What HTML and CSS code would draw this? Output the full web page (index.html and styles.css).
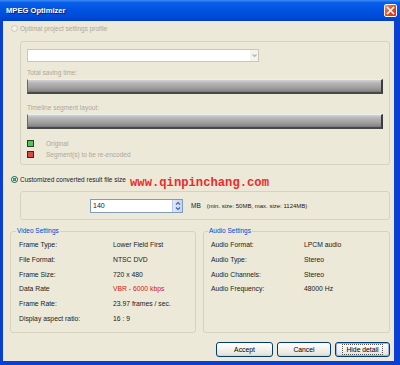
FILE: index.html
```html
<!DOCTYPE html>
<html>
<head>
<meta charset="utf-8">
<title>MPEG Optimizer</title>
<link rel="stylesheet" href="styles.css">
</head>
<body>
<div class="window">
  <div class="titlebar">
    <span class="title">MPEG Optimizer</span>
    <span class="close">
      <svg width="13" height="13" viewBox="0 0 13 13"><path d="M3.5 3.5 L9.5 9.5 M9.5 3.5 L3.5 9.5" stroke="#fff" stroke-width="1.6" stroke-linecap="square"/></svg>
    </span>
  </div>

  <div class="client">
    <div class="radio disabled"><span class="dot"></span>Optimal project settings profile</div>

    <div class="panel panel-profile">
      <div class="select"><span class="select-arrow">
        <svg width="7" height="7" viewBox="0 0 7 7"><path d="M1.5 2.5 L3.5 4.5 L5.5 2.5" fill="none" stroke="#b8b6a8" stroke-width="1.2"/></svg>
      </span></div>
      <div class="caption">Total saving time:</div>
      <div class="bar"></div>
      <div class="caption caption-2">Timeline segment layout:</div>
      <div class="bar"></div>
      <div class="legend">
        <div class="legend-row"><span class="swatch swatch-green"></span>Original</div>
        <div class="legend-row"><span class="swatch swatch-red"></span>Segment(s) to be re-encoded</div>
      </div>
    </div>

    <div class="radio radio-custom"><span class="dot checked"></span>Customized converted result file size</div>

    <div class="panel panel-size">
      <div class="spin">
        <span class="spin-value">140</span>
        <span class="spin-btn">
          <svg width="8" height="12" viewBox="0 0 8 12"><path d="M2 4.5 L4 2.5 L6 4.5 M2 7.5 L4 9.5 L6 7.5" fill="none" stroke="#4d6185" stroke-width="1.1"/></svg>
        </span>
      </div>
      <span class="unit">MB</span>
      <span class="hint">(min. size: 50MB, max. size: 1124MB)</span>
    </div>

    <div class="details">
      <fieldset class="group">
        <legend>Video Settings</legend>
        <div class="row"><span class="key">Frame Type:</span><span>Lower Field First</span></div>
        <div class="row"><span class="key">File Format:</span><span>NTSC DVD</span></div>
        <div class="row"><span class="key">Frame Size:</span><span>720 x 480</span></div>
        <div class="row"><span class="key">Data Rate</span><span class="warn">VBR - 6000 kbps</span></div>
        <div class="row"><span class="key">Frame Rate:</span><span>23.97 frames / sec.</span></div>
        <div class="row"><span class="key">Display aspect ratio:</span><span>16 : 9</span></div>
      </fieldset>
      <fieldset class="group group-audio">
        <legend>Audio Settings</legend>
        <div class="row"><span class="key">Audio Format:</span><span>LPCM audio</span></div>
        <div class="row"><span class="key">Audio Type:</span><span>Stereo</span></div>
        <div class="row"><span class="key">Audio Channels:</span><span>Stereo</span></div>
        <div class="row"><span class="key">Audio Frequency:</span><span>48000 Hz</span></div>
      </fieldset>
    </div>

    <div class="buttons">
      <button class="btn btn-accept">Accept</button>
      <button class="btn btn-cancel">Cancel</button>
      <button class="btn btn-hide"><span class="focus">Hide detail</span></button>
    </div>

    <div class="watermark">www.qinpinchang.com</div>
  </div>
</div>
</body>
</html>
```

FILE: styles.css
```css
body {
	margin: 0;
	background-color: #fff;
	font-family: "Liberation Sans", Arial, sans-serif;
	font-size: 6.5px;
	color: #1a1a1a;
}

.window {
	width: 400px;
	height: 365px;
	background: #0a3fd4;
	display: flex;
	flex-direction: column;
}

/* title bar */
.titlebar {
	flex: none;
	height: 21px;
	display: flex;
	align-items: center;
	justify-content: space-between;
	padding: 0 3px 0 6px;
	background: linear-gradient(#3b8cf5 0, #0a5fe8 12%, #0054e3 45%, #004ad8 80%, #003fc4 100%);
}

.title {
	color: #fff;
	font-weight: bold;
	font-size: 7.6px;
	text-shadow: 1px 1px 0 #0a1e6e;
}

.close {
	width: 13px;
	height: 13px;
	box-sizing: border-box;
	border: 1px solid #f4f4f4;
	border-radius: 2px;
	background: linear-gradient(135deg, #f0927a 0, #e2502b 45%, #c8341a 100%);
	display: flex;
	margin-top: -1px;
}

.close svg {
	margin: -1px;
}

/* client area */
.client {
	flex: 1;
	position: relative;
	margin: 0 6px 4px 3px;
	background: #ece9d8;
	padding: 2px 4px 0 7px;
}

.radio {
	height: 10px;
	display: flex;
	align-items: center;
	padding-left: 1px;
}

.radio.disabled {
	color: #aca899;
}

.radio-custom {
	margin-top: 9px;
}

.dot {
	width: 7px;
	height: 7px;
	box-sizing: border-box;
	border-radius: 50%;
	border: 1px solid #cac8bb;
	background: #f4f3ee;
	margin-right: 2px;
}

.dot.checked {
	border-color: #1f4f7a;
	background: radial-gradient(circle, #3cc43c 0, #1f9a1f 1.6px, #fff 2px);
}

/* group panels */
.panel {
	margin-left: 10px;
	border: 1px solid #d5d2c2;
	border-radius: 3px;
}

.panel-profile {
	margin-top: 8px;
	height: 124px;
	box-sizing: border-box;
	padding: 7px 6px 0 6px;
	color: #aca899;
}

.select {
	width: 232px;
	height: 13px;
	box-sizing: border-box;
	border: 1px solid #c9c7ba;
	background: #fff;
	display: flex;
	justify-content: flex-end;
}

.select-arrow {
	width: 8px;
	height: 11px;
	background: #f4f3ee;
	display: flex;
	align-items: center;
	justify-content: center;
}

.caption {
	margin-top: 6px;
	height: 10px;
	line-height: 10px;
}

.caption-2 {
	margin-top: 9px;
}

.bar {
	margin-top: 1px;
	height: 15px;
	box-sizing: border-box;
	border-top: 1px solid #eeeeee;
	border-left: 1px solid #6a6a6a;
	border-right: 2px solid #3c3c3c;
	border-bottom: 2px solid #484848;
	background: linear-gradient(#d4d4d4 0, #b6b6b6 25%, #a6a6a6 55%, #8e8e8e 85%, #7a7a7a 100%);
}

.legend {
	margin-top: 9px;
}

.legend-row {
	height: 10px;
	margin-bottom: 1px;
	display: flex;
	align-items: center;
}

.swatch {
	width: 7px;
	height: 7px;
	box-sizing: border-box;
	border: 1px solid #2d3a2a;
	margin-right: 12px;
}

.swatch-green {
	background: #4fc84f;
}

.swatch-red {
	border-color: #4a2020;
	background: #d84a4a;
}

.panel-size {
	margin-top: 7px;
	height: 29px;
	box-sizing: border-box;
	padding: 7px 0 0 69px;
	display: flex;
	align-items: flex-start;
}

.spin {
	width: 93px;
	height: 14px;
	box-sizing: border-box;
	border: 1px solid #7f9db9;
	background: #fff;
	display: flex;
	justify-content: space-between;
}

.spin-value {
	padding-left: 2px;
	line-height: 12px;
	font-size: 7px;
}

.spin-btn {
	width: 9px;
	background: linear-gradient(90deg, #dfe8fb, #c1d3fb);
	border-left: 1px solid #b8c9ee;
	display: flex;
	justify-content: center;
	align-items: center;
}

.unit {
	margin-left: 8px;
	line-height: 14px;
}

.hint {
	margin-left: 6px;
	line-height: 14px;
	font-size: 6px;
}

/* video / audio details */
.details {
	margin-top: 6px;
	height: 107px;
	display: flex;
	gap: 7px;
}

.group {
	flex: none;
	width: 186px;
	min-width: 0;
	margin: 0;
	padding: 2px 0 0 8px;
	box-sizing: border-box;
	border: 1px solid #d5d2c2;
	border-radius: 3px;
}

.group-audio {
	width: 187px;
	padding-left: 7px;
}

.group legend {
	padding: 0 1px;
	margin-left: -3px;
	height: 10px;
	line-height: 10px;
	color: #0046d5;
}

.row {
	height: 14.8px;
	line-height: 14.8px;
	display: flex;
	font-size: 6.8px;
}

.key {
	width: 94px;
	flex: none;
}

.group-audio .key {
	width: 93px;
}

.warn {
	color: #d01818;
}

/* buttons */
.buttons {
	margin-top: 9px;
	display: flex;
	justify-content: flex-end;
	gap: 4px;
}

.btn {
	height: 15px;
	box-sizing: border-box;
	padding: 0;
	border: 1px solid #003c74;
	border-radius: 3px;
	background: linear-gradient(#ffffff 0, #f5f4ee 40%, #e9e7dc 85%, #d6d0c4 100%);
	font-family: "Liberation Sans", Arial, sans-serif;
	font-size: 6.8px;
	color: #000;
	display: flex;
	align-items: center;
	justify-content: center;
}

.btn-accept {
	width: 57px;
}

.btn-cancel {
	width: 54px;
}

.btn-hide {
	width: 55px;
	box-shadow: inset 0 0 0 1px #9db5ec;
}

.focus {
	border: 1px dotted #555;
	padding: 1px 3px;
	line-height: 7px;
}

/* overlay text */
.watermark {
	position: absolute;
	left: 127px;
	top: 155px;
	font-family: "Liberation Mono", "Courier New", monospace;
	font-weight: bold;
	font-size: 12.2px;
	color: #f02a2a;
	letter-spacing: 0;
}
```
